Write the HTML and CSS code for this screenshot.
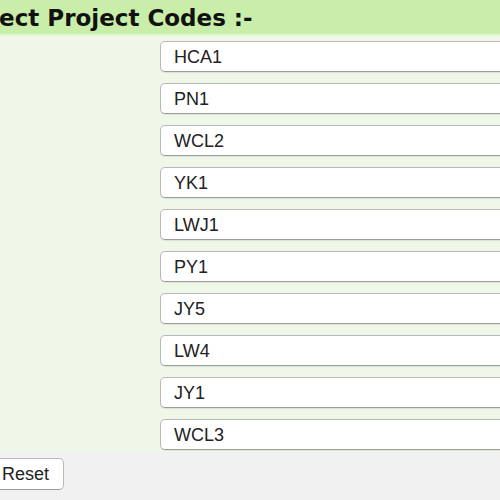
FILE: index.html
```html
<!DOCTYPE html>
<html>
<head>
<meta charset="utf-8">
<link rel="stylesheet" href="styles.css">
</head>
<body>
<div class="page">
  <div class="header">Select Project Codes :-</div>
  <div class="form">
    <div class="codes">
      <input class="code" type="text" value="HCA1">
      <input class="code" type="text" value="PN1">
      <input class="code" type="text" value="WCL2">
      <input class="code" type="text" value="YK1">
      <input class="code" type="text" value="LWJ1">
      <input class="code" type="text" value="PY1">
      <input class="code" type="text" value="JY5">
      <input class="code" type="text" value="LW4">
      <input class="code" type="text" value="JY1">
      <input class="code" type="text" value="WCL3">
    </div>
  </div>
  <div class="actions">
    <button class="btn" type="button">Reset</button>
  </div>
</div>
</body>
</html>
```
FILE: styles.css
```css
html, body {
  margin: 0;
  padding: 0;
  overflow: hidden;
  background: #f1f1f1;
}
.page {
  margin-left: -62px;
  width: 700px;
}
.header {
  height: 34px;
  line-height: 37px;
  background: #c8eeaa;
  font-family: "DejaVu Sans", Verdana, sans-serif;
  font-weight: bold;
  font-size: 23px;
  color: #111;
  padding-left: 21px;
  border-bottom: 2px solid #e4f5d6;
  overflow: hidden;
  white-space: nowrap;
}
.form {
  background: #eef7e8;
  padding: 5px 0 2px 222px;
}
.codes {
  display: flex;
  flex-direction: column;
  gap: 11px;
}
.code {
  box-sizing: border-box;
  width: 420px;
  height: 31px;
  margin: 0;
  padding: 2px 13px 0;
  border: 1px solid #b9b9b9;
  border-bottom-color: #9c9c9c;
  border-radius: 5px;
  background: #fff;
  box-shadow: 0 1px 1px rgba(0,0,0,0.08);
  font-family: "Liberation Sans", Arial, sans-serif;
  font-size: 18px;
  color: #222;
  outline: none;
}
.actions {
  padding: 6px 0 8px 0;
}
.btn {
  box-sizing: border-box;
  height: 32px;
  width: 126px;
  margin: 0;
  padding: 0 14px 0 0;
  text-align: right;
  border: 1px solid #b9b9b9;
  border-bottom-color: #9c9c9c;
  border-radius: 5px;
  background: #fff;
  font-family: "Liberation Sans", Arial, sans-serif;
  font-size: 18px;
  color: #222;
}
```
